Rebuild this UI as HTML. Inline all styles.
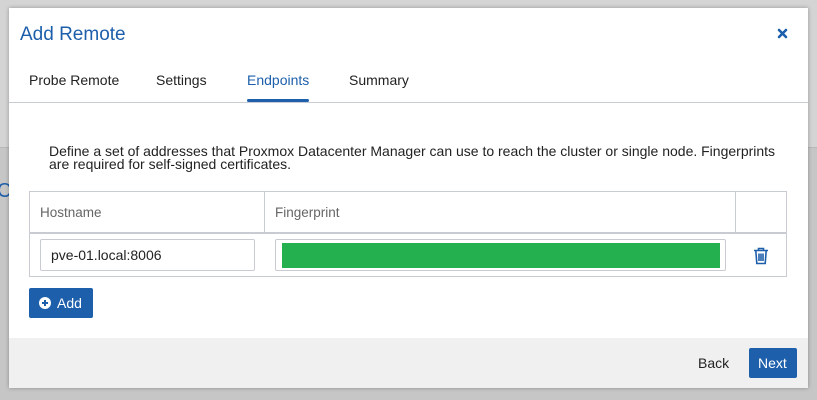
<!DOCTYPE html>
<html><head><style>
*{box-sizing:border-box;margin:0;padding:0}
body{width:817px;height:400px;overflow:hidden;background:#c6c6c6;font-family:"Liberation Sans",sans-serif;position:relative;color:#222}
.bgtop{position:absolute;left:0;top:0;width:817px;height:148px;background:#d4d4d4;border-bottom:1px solid #b8b8b8}
.c{position:absolute;left:-3px;top:180px;color:#1d5fab;font-size:20px}
.dlg{position:absolute;left:9px;top:8px;width:799px;height:380px;background:#fff;box-shadow:0 0 4px rgba(0,0,0,.3)}
.t{position:absolute;left:11px;top:16px;font-size:19px;color:#1d5fab}
.tab{position:absolute;top:64px;font-size:14px;color:#222}
.ul{position:absolute;left:238px;top:91px;width:62px;height:3px;background:#1d5fab;border-radius:2px}
.sep{position:absolute;left:0;top:94px;width:799px;height:1px;background:#c8ccd2}
.desc{position:absolute;left:40px;top:137px;font-size:14px;line-height:13px;color:#222;white-space:nowrap}
.tbl{position:absolute;left:20px;top:183px;width:758px;height:86px;border:1px solid #c8ccd2}
.hr{position:absolute;left:0;top:40px;width:756px;height:2px;background:#c8ccd2}
.vl{position:absolute;top:0;width:1px;height:41px;background:#c8ccd2}
.th{position:absolute;top:13px;font-size:13.5px;color:#666}
.in{position:absolute;border:1px solid #c8ccd2;border-radius:2px;background:#fff}
.btn{position:absolute;background:#1d5fab;color:#fff;border-radius:2px;font-size:14px}
.foot{position:absolute;left:0;top:330px;width:799px;height:50px;background:#f0f0f0}
</style></head><body>
<div class="bgtop"></div><div class="c">C</div>
<div class="dlg">
<div class="t">Add Remote</div>
<svg style="position:absolute;left:768px;top:20px" width="11" height="11" viewBox="0 0 11 11" stroke="#1d5fab" stroke-width="2.6" stroke-linecap="round"><path d="M2 2l7 7M9 2l-7 7"/></svg>
<div class="tab" style="left:20px">Probe Remote</div>
<div class="tab" style="left:147px">Settings</div>
<div class="tab" style="left:238px;color:#1d5fab">Endpoints</div>
<div class="tab" style="left:340px">Summary</div>
<div class="ul"></div><div class="sep"></div>
<div class="desc">Define a set of addresses that Proxmox Datacenter Manager can use to reach the cluster or single node. Fingerprints<br>are required for self-signed certificates.</div>
<div class="tbl">
<div class="vl" style="left:234px"></div><div class="vl" style="left:705px"></div>
<div class="th" style="left:10px">Hostname</div><div class="th" style="left:245px">Fingerprint</div>
<div class="hr"></div>
<div class="in" style="left:10px;top:47px;width:215px;height:32px;font-size:14px;padding:7px 0 0 10px">pve-01.local:8006</div>
<div class="in" style="left:245px;top:47px;width:451px;height:32px"><div style="position:absolute;left:6px;top:3px;width:438px;height:25px;background:#24b04e"></div></div>
<svg style="position:absolute;left:723px;top:55px" width="16" height="18" viewBox="0 0 16 18" fill="none" stroke="#1d5fab" stroke-width="1.6"><path d="M1 3.5h14M5.5 3.5V1.5h5v2M2.8 3.5l1 13h8.4l1-13M6 6.5v7.5M8 6.5v7.5M10 6.5v7.5"/></svg>
</div>
<div class="btn" style="left:20px;top:280px;width:64px;height:30px;display:flex;align-items:center;padding-left:10px;gap:6px"><svg width="12" height="12" viewBox="0 0 12 12"><circle cx="6" cy="6" r="6" fill="#fff"/><path d="M6 3v6M3 6h6" stroke="#1d5fab" stroke-width="2"/></svg>Add</div>
<div class="foot">
<div style="position:absolute;left:689px;top:17px;font-size:14px">Back</div>
<div class="btn" style="left:740px;top:10px;width:48px;height:30px;padding:7px 0 0 9px">Next</div>
</div>
</div>
</body></html>
